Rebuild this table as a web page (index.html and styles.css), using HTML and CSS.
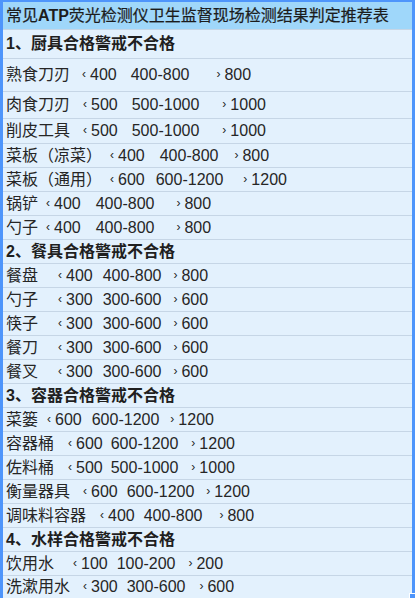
FILE: index.html
```html
<!DOCTYPE html>
<html lang="zh">
<head>
<meta charset="utf-8">
<title>常见ATP荧光检测仪卫生监督现场检测结果判定推荐表</title>
<link rel="stylesheet" href="styles.css">
</head>
<body>
<div class="sheet">
  <div class="row title">常见<b>ATP</b>荧光检测仪卫生监督现场检测结果判定推荐表</div>
  <div class="row sec first">1、厨具合格警戒不合格</div>
  <div class="row h32"><span>熟食刀刃</span><span class="a m11">‹</span><span>400</span><span class="m14">400-800</span><span class="a m26">›</span><span>800</span></div>
  <div class="row h26"><span>肉食刀刃</span><span class="a m12">‹</span><span>500</span><span class="m14">500-1000</span><span class="a m22">›</span><span>1000</span></div>
  <div class="row h24"><span>削皮工具</span><span class="a m12">‹</span><span>500</span><span class="m14">500-1000</span><span class="a m22">›</span><span>1000</span></div>
  <div class="row"><span>菜板（凉菜）</span><span class="a m7">‹</span><span>400</span><span class="m15">400-800</span><span class="a m15">›</span><span>800</span></div>
  <div class="row"><span>菜板（通用）</span><span class="a m7">‹</span><span>600</span><span class="m11">600-1200</span><span class="a m19">›</span><span>1200</span></div>
  <div class="row"><span>锅铲</span><span class="a m7">‹</span><span>400</span><span class="m15">400-800</span><span class="a m21">›</span><span>800</span></div>
  <div class="row"><span>勺子</span><span class="a m7">‹</span><span>400</span><span class="m15">400-800</span><span class="a m21">›</span><span>800</span></div>
  <div class="row sec">2、餐具合格警戒不合格</div>
  <div class="row"><span>餐盘</span><span class="a m19">‹</span><span>400</span><span class="m10">400-800</span><span class="a m11">›</span><span>800</span></div>
  <div class="row"><span>勺子</span><span class="a m19">‹</span><span>300</span><span class="m10">300-600</span><span class="a m11">›</span><span>600</span></div>
  <div class="row"><span>筷子</span><span class="a m19">‹</span><span>300</span><span class="m10">300-600</span><span class="a m11">›</span><span>600</span></div>
  <div class="row"><span>餐刀</span><span class="a m19">‹</span><span>300</span><span class="m10">300-600</span><span class="a m11">›</span><span>600</span></div>
  <div class="row"><span>餐叉</span><span class="a m19">‹</span><span>300</span><span class="m10">300-600</span><span class="a m11">›</span><span>600</span></div>
  <div class="row sec">3、容器合格警戒不合格</div>
  <div class="row"><span>菜篓</span><span class="a m8">‹</span><span>600</span><span class="m10">600-1200</span><span class="a m10">›</span><span>1200</span></div>
  <div class="row"><span>容器桶</span><span class="a m13">‹</span><span>600</span><span class="m8">600-1200</span><span class="a m12">›</span><span>1200</span></div>
  <div class="row"><span>佐料桶</span><span class="a m13">‹</span><span>500</span><span class="m8">500-1000</span><span class="a m12">›</span><span>1000</span></div>
  <div class="row"><span>衡量器具</span><span class="a m12">‹</span><span>600</span><span class="m9">600-1200</span><span class="a m11">›</span><span>1200</span></div>
  <div class="row"><span>调味料容器</span><span class="a m13">‹</span><span>400</span><span class="m9">400-800</span><span class="a m16">›</span><span>800</span></div>
  <div class="row sec">4、水样合格警戒不合格</div>
  <div class="row"><span>饮用水</span><span class="a m18">‹</span><span>100</span><span class="m9">100-200</span><span class="a m12">›</span><span>200</span></div>
  <div class="row last"><span>洗漱用水</span><span class="a m12">‹</span><span>300</span><span class="m9">300-600</span><span class="a m13">›</span><span>600</span></div>
  <div class="handle"></div>
</div>
</body>
</html>
```
FILE: styles.css
```css
* { box-sizing: border-box; }
html, body { margin: 0; background: #ffffff; }
body {
  font-family: "Liberation Sans", "Noto Sans CJK SC", sans-serif;
  font-size: 16px;
  color: #262626;
}
.sheet {
  position: relative;
  width: 415px;
  border: 3px solid #4e95fb;
  border-top-width: 2px;
  border-bottom: none;
  background: #e3f1fd;
}
.sheet::after {
  content: "";
  position: absolute;
  left: -3px;
  right: -3px;
  bottom: -3px;
  height: 3px;
  background: repeating-linear-gradient(90deg, #4e95fb 0 6px, #ffffff 6px 8px);
}
.row {
  display: flex;
  align-items: center;
  height: 24px;
  padding-left: 3px;
  border-bottom: 1px solid #c6d6e6;
  white-space: pre;
  line-height: 20px;
}
.row.last { height: 22px; border-bottom: none; }
.title {
  height: 28px;
  background: #9fd7fa;
  color: #1c1c1c;
  -webkit-text-stroke: 0.2px #1c1c1c;
}
.title b { font-weight: bold; -webkit-text-stroke: 0; }
.sec { font-weight: bold; color: #1f1f1f; }
.sec.first { height: 29px; }
.h32 { height: 33px; }
.h26 { height: 27px; }
.h24 { height: 25px; }
.a {
  font-size: 12px;
  margin-right: 4px;
  margin-bottom: 2px;
  padding-left: 1px;
}
.m7 { margin-left: 7px; }
.m8 { margin-left: 8px; }
.m9 { margin-left: 9px; }
.m10 { margin-left: 10px; }
.m11 { margin-left: 11px; }
.m12 { margin-left: 12px; }
.m13 { margin-left: 13px; }
.m14 { margin-left: 14px; }
.m15 { margin-left: 15px; }
.m16 { margin-left: 16px; }
.m18 { margin-left: 18px; }
.m19 { margin-left: 19px; }
.m21 { margin-left: 21px; }
.m22 { margin-left: 22px; }
.m26 { margin-left: 26px; }
.handle {
  position: absolute;
  right: -3px;
  bottom: -4px;
  width: 6px;
  height: 9px;
  background: #4e95fb;
  border-top: 1px solid #ffffff;
  border-left: 1px solid #ffffff;
  z-index: 1;
}
```
